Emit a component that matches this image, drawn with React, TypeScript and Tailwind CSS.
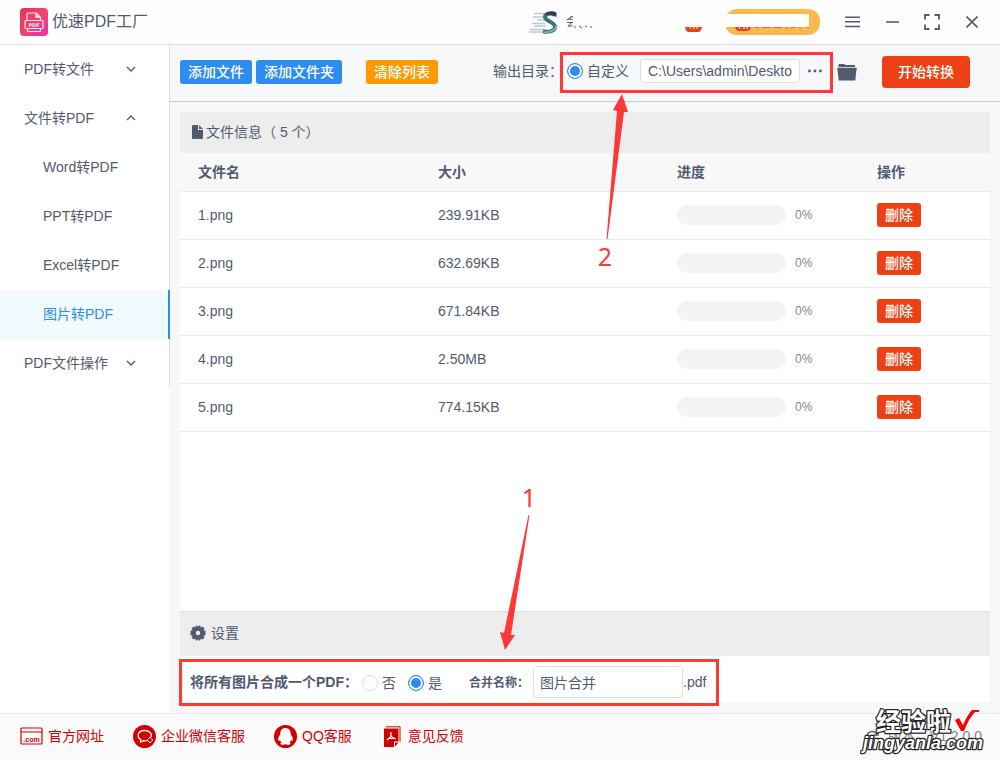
import { useState } from "react";
import type { ReactNode } from "react";

const FILES = [
    { name: "1.png", size: "239.91KB", progress: 0 },
    { name: "2.png", size: "632.69KB", progress: 0 },
    { name: "3.png", size: "671.84KB", progress: 0 },
    { name: "4.png", size: "2.50MB", progress: 0 },
    { name: "5.png", size: "774.15KB", progress: 0 },
];

const SUB_ITEMS = ["Word转PDF", "PPT转PDF", "Excel转PDF", "图片转PDF"];

const RADIO =
    "size-4 shrink-0 appearance-none rounded-full border border-[#dcdee2] bg-white checked:border-[#2d8cf0] checked:bg-[#2d8cf0] checked:shadow-[inset_0_0_0_2px_white]";

function Chevron({ up = false }: { up?: boolean }) {
    return (
        <svg width="10" height="10" viewBox="0 0 10 10" fill="none" stroke="currentColor" strokeWidth="1.3" className={up ? "rotate-180" : ""}>
            <path d="M1 3l4 4 4-4" />
        </svg>
    );
}

function AppLogo() {
    return (
        <svg width="28" height="28" viewBox="0 0 28 28">
            <defs>
                <linearGradient id="logo" x1="0" y1="0" x2="1" y2="1">
                    <stop offset="0" stopColor="#e52f5a" />
                    <stop offset="0.55" stopColor="#ec4870" />
                    <stop offset="1" stopColor="#ea2fb0" />
                </linearGradient>
            </defs>
            <rect width="28" height="28" rx="4" fill="url(#logo)" />
            <g fill="none" stroke="#ffe3ea" strokeWidth="1.200">
                <path d="M7 12.500V6q0-1 1-1h8.500l4 4.500v3" />
                <path d="M16 5v4.500h4.500" fill="#ffe3ea" />
                <rect x="5" y="12.500" width="18" height="8" rx="1" />
                <path d="M7.500 21v1.500q0 1 1 1h11q1 0 1-1V21" />
            </g>
            <text x="14" y="18.500" textAnchor="middle" fontSize="5" fontWeight="700" fill="#ffe3ea" fontFamily="DejaVu Sans, sans-serif">
                PDF
            </text>
        </svg>
    );
}

function Avatar() {
    return (
        <svg width="29" height="23" viewBox="0 0 29 23" fill="none">
            <path d="M5 2.500h10M4 6h11M8 9h7M3 12.500h13M5 15h12M1 18.500h16M0 21h17" stroke="#b9c9cc" strokeWidth="1.400" />
            <path d="M26 4C22 1.500 16 2.500 16 6c0 4.500 10 4.500 10 10 0 4-6 5.500-12 4.500" stroke="#3f7078" strokeWidth="4" />
            <path d="M27.500 14c0 5-6 7.500-13 7.500" stroke="#76b0b0" strokeWidth="2" />
            <path d="M17 2q5-3 10.500-.5V6Q22 3 17 4z" fill="#333f48" />
        </svg>
    );
}

function Header() {
    return (
        <header className="flex h-[45px] shrink-0 items-center border-b border-[#dcdee2] bg-[#fefefe] pl-5 pr-[22px]">
            <AppLogo />
            <h1 className="ml-1 text-base">优速PDF工厂</h1>
            <div className="ml-auto flex items-center">
                <Avatar />
                <div className="ml-2 h-3 w-[7px] overflow-hidden text-xs leading-3">会</div>
                <svg width="20" height="4" viewBox="0 0 20 4" className="mt-2.5" stroke="#515a6e">
                    <path d="M1 2h2M6 1l3 2M12 1l2 1M18 1v2" />
                </svg>
                <svg width="17" height="5" viewBox="0 0 17 5" className="ml-[92px] mt-3.5">
                    <path d="M0 0h17q-1 5-4 5H4Q1 5 0 0z" fill="#ed4014" />
                    <path d="M5 0l1 2M9 0v2M12 0v2" stroke="#fff" />
                </svg>
                <button aria-label="会员" className="ml-[23px] h-[26px] w-[95px] overflow-hidden rounded-xl bg-[#ffb850]">
                    <svg width="95" height="26" viewBox="0 0 95 26">
                        <path d="M0 5h84v13H0z" fill="#fff" />
                        <path d="M10 18h16q-1 4-4 4h-8q-3 0-4-4z" fill="#ed4014" />
                        <path d="M14 18l1 2M19 18v2M22 18v2" stroke="#fff" />
                        <path d="M30 18.500h4M37 18.500h8M48 18.500h9M60 18.500l3 1M66 18.500h4M74 18.500l2 1M82 18.500h2" stroke="#e0662b" />
                    </svg>
                </button>
                <button aria-label="菜单" className="ml-[25px]">
                    <svg width="15" height="12" viewBox="0 0 15 12" stroke="currentColor" strokeWidth="1.500">
                        <path d="M0 1.200h15M0 5.800h15M0 10.400h15" />
                    </svg>
                </button>
                <button aria-label="最小化" className="ml-[26px]">
                    <svg width="13" height="12" viewBox="0 0 13 12" stroke="currentColor" strokeWidth="1.600">
                        <path d="M0 6h13" />
                    </svg>
                </button>
                <button aria-label="最大化" className="ml-[25px]">
                    <svg width="16" height="16" viewBox="0 0 16 16" fill="none" stroke="currentColor" strokeWidth="1.800">
                        <path d="M1 5.500V1h4.500M10.500 1H15v4.500M15 10.500V15h-4.500M5.500 15H1v-4.500" />
                    </svg>
                </button>
                <button aria-label="关闭" className="ml-[26px]">
                    <svg width="12" height="12" viewBox="0 0 12 12" stroke="currentColor" strokeWidth="1.600">
                        <path d="M.5.500l11 11M11.500.500l-11 11" />
                    </svg>
                </button>
            </div>
        </header>
    );
}

function MenuGroup({ label, open = false }: { label: string; open?: boolean }) {
    return (
        <button className="flex h-[49px] w-full items-center justify-between border-r border-[#dcdee2] pb-0.5 pl-6 pr-[33px]">
            <span>{label}</span>
            <Chevron up={open} />
        </button>
    );
}

function Sidebar() {
    const [active, setActive] = useState("图片转PDF");

    return (
        <nav className="w-[170px] shrink-0 bg-white">
            <MenuGroup label="PDF转文件" />
            <MenuGroup label="文件转PDF" open />
            {SUB_ITEMS.map((item) => (
                <button
                    key={item}
                    onClick={() => setActive(item)}
                    className={
                        item === active
                            ? "flex h-[49px] w-full items-center border-r-2 border-[#2d8cf0] bg-[#f0faff] pb-0.5 pl-[43px] text-[#2d8cf0]"
                            : "flex h-[49px] w-full items-center border-r border-[#dcdee2] pb-0.5 pl-[43px]"
                    }>
                    {item}
                </button>
            ))}
            <MenuGroup label="PDF文件操作" />
        </nav>
    );
}

type ArrowProps = { className: string; points: string; label: string; x: number; y: number };

function Arrow({ className, points, label, x, y }: ArrowProps) {
    return (
        <svg width="60" height="180" viewBox="0 0 60 180" fill="#fd3836" className={`pointer-events-none absolute z-10 overflow-visible ${className}`}>
            <polygon points={points} />
            <text x={x} y={y} textAnchor="middle" fontSize="25" fontFamily="Noto Sans, sans-serif">
                {label}
            </text>
        </svg>
    );
}

function Toolbar() {
    return (
        <div className="flex h-[57px] shrink-0 items-center border-b border-[#c9cbce] pb-0.5 pl-2.5 pr-[30px]">
            <button className="h-6 rounded-[3px] bg-[#2d8cf0] px-2 font-medium text-white">添加文件</button>
            <button className="ml-1 h-6 rounded-[3px] bg-[#2d8cf0] px-2 font-medium text-white">添加文件夹</button>
            <button className="ml-6 h-6 rounded-[3px] bg-[#ff9900] px-2 font-medium text-white">清除列表</button>
            <div className="ml-auto flex items-center">
                <span className="w-[67px] whitespace-nowrap pb-0.5">输出目录：</span>
                <div className="relative flex h-[41px] items-center border-[3px] border-[#fd3836] pb-0.5 pl-1">
                    <input id="custom-dir" type="radio" defaultChecked className={RADIO} />
                    <label htmlFor="custom-dir" className="ml-1">
                        自定义
                    </label>
                    <input
                        aria-label="输出目录"
                        defaultValue="C:\Users\admin\Deskto"
                        className="ml-[11px] h-6 w-40 rounded-[3px] border border-[#dcdee2] bg-white px-[7px]"
                    />
                    <button aria-label="更多" className="mx-2">
                        <svg width="14" height="4" viewBox="0 0 14 4" fill="currentColor">
                            <circle cx="1.500" cy="2" r="1.400" />
                            <circle cx="7" cy="2" r="1.400" />
                            <circle cx="12.500" cy="2" r="1.400" />
                        </svg>
                    </button>
                    <Arrow className="left-8 top-[38px]" points="27,1 18,17 22,18 11.500,146 12.500,146 29,19 33,19" label="2" x={10} y={173} />
                </div>
                <button aria-label="打开文件夹" className="ml-1">
                    <svg width="20" height="18" viewBox="0 0 20 18" fill="currentColor">
                        <path d="M1.500 4V1.500Q1.500 1 2 1h5l1.500 1h9q.500 0 .500.500V4z" />
                        <path d="M.800 4.800h18.400q.500 0 .500.500L18.300 17q-.1.500-.6.500H2.300q-.5 0-.6-.5L.300 5.300Q.300 4.800.800 4.800z" />
                    </svg>
                </button>
                <button className="ml-[25px] h-8 rounded bg-[#ed4014] px-4 font-medium text-white">开始转换</button>
            </div>
        </div>
    );
}

function FileTable() {
    return (
        <table className="w-full table-fixed border-separate border-spacing-0 text-left">
            <colgroup>
                <col className="w-[240px]" />
                <col className="w-[239px]" />
                <col className="w-[200px]" />
                <col />
            </colgroup>
            <thead>
                <tr className="h-[39px] bg-[#f8f8f9] [&>th]:border-b [&>th]:border-[#e8eaec]">
                    <th className="pl-[18px] font-bold">文件名</th>
                    <th className="pl-[18px] font-bold">大小</th>
                    <th className="pl-[18px] font-bold">进度</th>
                    <th className="pl-[18px] font-bold">操作</th>
                </tr>
            </thead>
            <tbody>
                {FILES.map((file) => (
                    <tr key={file.name} className="h-12 [&>td]:border-b [&>td]:border-[#e8eaec] [&>td]:pb-px">
                        <td className="pl-[18px]">{file.name}</td>
                        <td className="pl-[18px]">{file.size}</td>
                        <td className="pl-[18px]">
                            <div className="flex items-center">
                                <div className="h-5 w-[109px] overflow-hidden rounded-full bg-[#f3f3f3]">
                                    <div className="h-full bg-[#2d8cf0]" style={{ width: `${file.progress}%` }} />
                                </div>
                                <span className="ml-[9px] text-xs text-[#808695]">{file.progress}%</span>
                            </div>
                        </td>
                        <td className="pl-[18px]">
                            <button className="block h-6 rounded-[3px] bg-[#ed4014] px-2 font-medium text-white">删除</button>
                        </td>
                    </tr>
                ))}
            </tbody>
        </table>
    );
}

function Settings() {
    return (
        <section>
            <h2 className="flex h-[45px] items-center border-t border-[#dcdee2] bg-[#ededed] pb-0.5 pl-2.5">
                <svg width="16" height="16" viewBox="0 0 16 16" fill="currentColor">
                    <path
                        fillRule="evenodd"
                        d="M3.500 1.500L5.200 2.500 5.800.500h1.400L8 2l.8-1.500h1.400l.6 2 1.700-1 2 2-1 1.700 2 .6v4.400l-2 .6 1 1.700-2 2-1.700-1-.6 2H8.800L8 14l-.8 1.500H5.800l-.6-2-1.700 1-2-2 1-1.700-2-.6V5.800l2-.6-1-1.700zM8 5.800a2.200 2.200 0 100 4.400 2.200 2.200 0 000-4.400z"
                    />
                </svg>
                <span className="ml-[5px]">设置</span>
            </h2>
            <div className="h-[46px] pt-[3px]">
                <fieldset
                    aria-label="将所有图片合成一个PDF"
                    className="relative -ml-px flex h-[47px] w-fit items-center border-[3px] border-[#fd3836] pl-2 pr-2.5">
                    <b className="w-[172px] whitespace-nowrap pb-0.5">将所有图片合成一个PDF：</b>
                    <input id="merge-no" name="merge" type="radio" className={RADIO} />
                    <label htmlFor="merge-no" className="ml-1">
                        否
                    </label>
                    <input id="merge-yes" name="merge" type="radio" defaultChecked className={`${RADIO} ml-3`} />
                    <label htmlFor="merge-yes" className="ml-1">
                        是
                    </label>
                    <label htmlFor="merge-name" className="ml-[27px] w-16 whitespace-nowrap text-xs font-bold">
                        合并名称：
                    </label>
                    <input id="merge-name" defaultValue="图片合并" className="mb-px h-8 w-[150px] rounded border border-[#dcdee2] bg-white px-1.5" />
                    <span className="pb-0.5">.pdf</span>
                    <Arrow className="-top-[177px] left-[303px]" points="20,165 15,147 19,148 43.500,30 44.500,30 26,150 30,150" label="1" x={44} y={22} />
                </fieldset>
            </div>
        </section>
    );
}

function FooterLink({ icon, children, className }: { icon: ReactNode; children: ReactNode; className: string }) {
    return (
        <a href="#" className={`flex items-center gap-[5px] ${className}`}>
            {icon}
            <span className="pb-px">{children}</span>
        </a>
    );
}

function Footer() {
    return (
        <footer className="flex h-[47px] shrink-0 items-center border-t border-[#e8eaec] bg-[#fafafa] pb-0.5 pl-5 pr-[18px] text-[#d00000]">
            <FooterLink
                className=""
                icon={
                    <svg width="23" height="18" viewBox="0 0 23 18" fill="none" stroke="currentColor">
                        <rect x="1" y="1" width="21" height="16" rx="1" strokeWidth="1.200" />
                        <path d="M1 5h21" />
                        <text x="11.500" y="14.500" textAnchor="middle" fontSize="7" fontWeight="700" fill="currentColor" stroke="none" fontFamily="Liberation Sans">
                            .com
                        </text>
                    </svg>
                }>
                官方网址
            </FooterLink>
            <FooterLink
                className="ml-[29px]"
                icon={
                    <svg width="23" height="23" viewBox="0 0 23 23">
                        <circle cx="11.500" cy="11.500" r="11.500" fill="currentColor" />
                        <path
                            d="M14.500 15.500c-1.200.4-2.600.5-4 .2L7.500 17l.3-2.400C3.500 12.300 4.500 6 10.800 5.500c5.700-.3 8.700 3.300 7 6.500"
                            fill="none"
                            stroke="#fff"
                            strokeWidth="1.300"
                        />
                        <path d="M17 12l1.300 1.700L20 15l-1.700 1.300L17 18l-1.300-1.700L14 15l1.700-1.300z" fill="none" stroke="#fff" />
                    </svg>
                }>
                企业微信客服
            </FooterLink>
            <FooterLink
                className="ml-[29px]"
                icon={
                    <svg width="23" height="23" viewBox="0 0 23 23">
                        <circle cx="11.500" cy="11.500" r="11.500" fill="currentColor" />
                        <path
                            d="M11.500 3C7.500 3 6 6 6.300 9.500 4.500 11.500 4 13.500 4.300 15.500c.3 1 1.200.2 1.700-.6.3 1.200.8 2 1.500 2.700-2 1-1 2.200 1 2.200 1.200 0 2.300-.3 3-.9.700.600 1.800.9 3 .9 2 0 3-1.200 1-2.200.700-.700 1.200-1.500 1.500-2.700.500.800 1.400 1.600 1.700.6.300-2-.2-4-2-6C17 6 15.500 3 11.500 3z"
                            fill="#fff"
                        />
                    </svg>
                }>
                QQ客服
            </FooterLink>
            <FooterLink
                className="ml-[32px]"
                icon={
                    <svg width="18" height="21" viewBox="0 0 18 21">
                        <path d="M2 .800h14v15" fill="none" stroke="currentColor" />
                        <path d="M0 2.500h14.500v13H10V21H0z" fill="currentColor" />
                        <path d="M11 16.500h3.500L11 20.500z" fill="currentColor" />
                        <path d="M7 6v4.500L3 14M7 10.500l4.500 2.500M6.500 8.500l.8 3M4.500 12.500h5" fill="none" stroke="#fff" strokeWidth="1.200" />
                    </svg>
                }>
                <span className="ml-px">意见反馈</span>
            </FooterLink>
            <div className="relative ml-auto flex items-center gap-2 text-[#808695]">
                <svg width="14" height="14" viewBox="0 0 14 14" fill="none" stroke="#515a6e" strokeWidth="1.500">
                    <path d="M1 7c1-5 7-6 10-2M12 1v5H8" />
                </svg>
                <span>版本：V1.2.0.0</span>
                <Watermark />
            </div>
        </footer>
    );
}

function Watermark() {
    return (
        <svg width="128" height="50" viewBox="0 0 128 50" className="pointer-events-none absolute -right-1.5 -top-[18px]">
            <g fill="#fff" stroke="#222" strokeWidth="2.500" strokeLinejoin="round" paintOrder="stroke" fontWeight="700">
                <text x="16" y="23" fontSize="25" fontFamily="Noto Sans CJK SC, sans-serif">
                    经验啦
                </text>
                <text x="3" y="41" fontSize="18" fontFamily="Liberation Sans, sans-serif" fontStyle="italic">
                    jingyanla.com
                </text>
            </g>
            <path d="M95 12l4-2 4 7q5-11 9-15h7v2h-4q-6 6-11 19h-3z" fill="#f00" />
        </svg>
    );
}

export default function App() {
    return (
        <div className="flex min-h-screen flex-col bg-white font-['Liberation_Sans','Noto_Sans_CJK_SC',sans-serif] text-sm text-[#515a6e]">
            <Header />
            <div className="flex flex-1">
                <Sidebar />
                <main className="flex min-w-0 flex-1 flex-col bg-[#f5f7f9]">
                    <Toolbar />
                    <div className="mx-2.5 mb-[11px] mt-2.5 flex flex-1 flex-col bg-white">
                        <h2 className="flex h-[41px] items-center bg-[#ededed] pb-0.5 pl-3">
                            <svg width="11" height="14" viewBox="0 0 11 14" fill="currentColor" className="mr-[3px]">
                                <path d="M1 0h5v5h5v8q0 1-1 1H1q-1 0-1-1V1q0-1 1-1z" />
                                <path d="M7 0l4 4H7z" />
                            </svg>
                            文件信息（ 5 个）
                        </h2>
                        <FileTable />
                        <div className="flex-1" />
                        <Settings />
                    </div>
                </main>
            </div>
            <Footer />
        </div>
    );
}
